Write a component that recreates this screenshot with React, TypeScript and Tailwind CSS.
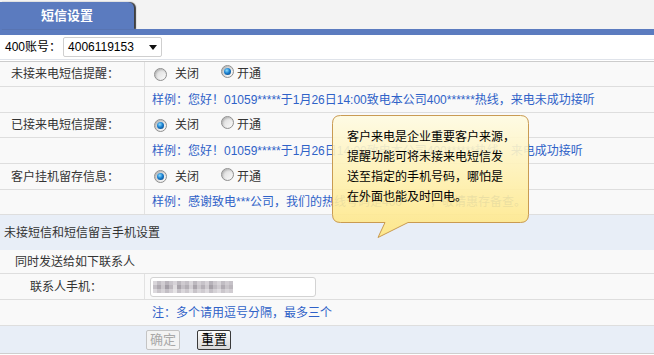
import React from "react";

const MOSAIC = [
  ["#d9d6da", "#c2bec4", "#d1cdd2", "#b9b4bb", "#c9c5cb", "#d7d3d8", "#bcb8be", "#cfcbd0", "#c4c0c6", "#dad7db", "#bdb9bf", "#d3cfd4", "#c7c3c9", "#d6d2d7", "#b7b3ba", "#ccc8cd", "#d8d5d9", "#c1bdc3", "#d0ccd1", "#c6c2c8"],
  ["#c4c0c6", "#afaab1", "#cbc7cc", "#a39ea6", "#bdb8be", "#e0dde0", "#a8a3aa", "#c3bfc5", "#b3afb5", "#d2ced3", "#aaa5ac", "#cac6cb", "#b6b1b8", "#cfcbd0", "#a6a1a8", "#c0bcc2", "#d0ccd1", "#b1acb3", "#c8c4c9", "#bcb7bd"],
  ["#dcd9dd", "#c9c5ca", "#d7d4d8", "#c3bfc5", "#d4d0d5", "#e6e4e6", "#c6c2c8", "#dad7db", "#cdc9ce", "#e1dfe2", "#c8c4c9", "#d9d6da", "#cfcbd0", "#dedbdf", "#c5c1c7", "#d5d2d6", "#e0dde1", "#cbc7cc", "#d8d5d9", "#d0ccd1"],
];

function Radio({ checked }: { checked?: boolean }) {
  return (
    <span className="relative inline-block h-[13px] w-[13px] shrink-0 rounded-full border border-[#8f8f8f] bg-gradient-to-br from-[#d8d8d8] to-[#fbfbfb] shadow-[inset_1px_1px_2px_rgba(0,0,0,0.2)]">
      {checked && (
        <span className="absolute left-[2px] top-[2px] h-[7px] w-[7px] rounded-full bg-[radial-gradient(circle_at_40%_35%,#8fe0ff_0%,#1a7fd0_45%,#063a6e_100%)]" />
      )}
    </span>
  );
}

function Switch({ on }: { on: boolean }) {
  return (
    <div className="flex items-center pl-[9px]">
      <Radio checked={!on} />
      <span className="ml-[8px]">关闭</span>
      <span className="ml-[22px]"><Radio checked={on} /></span>
      <span className="ml-[3px]">开通</span>
    </div>
  );
}

function Row({ label, h, children }: { label?: string; h: string; children?: React.ReactNode }) {
  return (
    <div className={`flex border-b border-[#dedede] bg-[#f9f9f9] ${h}`}>
      <div className="flex w-[145px] shrink-0 items-center border-r border-[#e2e2e2] pl-[11px] text-[#333]">{label}</div>
      <div className="flex flex-1 items-center">{children}</div>
    </div>
  );
}

function Sample({ text }: { text: string }) {
  return <span className="whitespace-nowrap pl-[7px] text-[#2f62c8]">{text}</span>;
}

function Tip() {
  return (
    <div className="absolute left-[332px] top-[115px] h-[124px] w-[198px]">
      <svg width="198" height="124" className="absolute left-0 top-0">
        <defs>
          <linearGradient id="tipbg" x1="0" y1="0" x2="0" y2="1">
            <stop offset="0" stopColor="#fffbe2" />
            <stop offset="1" stopColor="#ffe680" />
          </linearGradient>
        </defs>
        <path
          d="M8.5 0.5 H188.5 Q196.5 0.5 196.5 8.5 V99.5 Q196.5 107.5 188.5 107.5 H76 L46 122.5 L53 107.5 H8.5 Q0.5 107.5 0.5 99.5 V8.5 Q0.5 0.5 8.5 0.5 Z"
          fill="url(#tipbg)"
          fillOpacity="0.9"
          stroke="#c99b52"
          strokeWidth="1"
        />
      </svg>
      <div className="relative whitespace-nowrap pl-[15px] pt-[12px] leading-[20px] text-black">
        客户来电是企业重要客户来源，<br />
        提醒功能可将未接来电短信发<br />
        送至指定的手机号码，哪怕是<br />
        在外面也能及时回电。
      </div>
    </div>
  );
}

export default function App() {
  return (
    <div className="relative w-[654px] bg-white font-['Liberation_Sans','Noto_Sans_CJK_SC',sans-serif] text-[12px] text-[#333]">
      <div className="flex h-[29px] items-end bg-[#f3f3f3]">
        <div className="flex h-[27px] w-[134px] items-center justify-center rounded-tr-[6px] bg-[#5b7bbf] text-[13px] font-bold text-white shadow-[2px_0_1px_#3f3f3f]">
          短信设置
        </div>
      </div>
      <div className="h-[6px] bg-[#5b7bbf]" />

      <div className="flex h-[24px] items-center bg-white pl-[5px] text-black">
        <span>400账号：</span>
        <div className="ml-[2px] flex h-[20px] w-[99px] items-center justify-between rounded-[2px] border border-[#cfcfcf] bg-white pl-[4px] pr-[4px]">
          <span>4006119153</span>
          <svg width="8" height="5" viewBox="0 0 8 5"><path d="M0 0H8L4 5Z" fill="#111" /></svg>
        </div>
      </div>
      <div className="h-px bg-[#dfe3ea]" />
      <div className="h-px bg-white" />
      <div className="h-px bg-[#cccccc]" />

      <Row label="未接来电短信提醒：" h="h-[25px]"><Switch on /></Row>
      <Row h="h-[26px]"><Sample text="样例：您好！01059*****于1月26日14:00致电本公司400******热线，来电未成功接听" /></Row>
      <Row label="已接来电短信提醒：" h="h-[25px]"><Switch on={false} /></Row>
      <Row h="h-[26px]"><Sample text="样例：您好！01059*****于1月26日14:00致电本公司400******热线，来电成功接听" /></Row>
      <Row label="客户挂机留存信息：" h="h-[26px]"><Switch on={false} /></Row>
      <Row h="h-[25px]"><Sample text="样例：感谢致电***公司，我们的热线号码是400******，敬请惠存备查。" /></Row>

      <div className="flex h-[35px] items-center bg-[#e8eef7] pl-[4px] text-[#333]">未接短信和短信留言手机设置</div>

      <div className="flex h-[24px] items-center border-b border-[#dedede] bg-[#f9f9f9] pl-[15px]">同时发送给如下联系人</div>
      <div className="flex h-[26px] border-b border-[#dedede] bg-[#f9f9f9]">
        <div className="flex w-[145px] shrink-0 items-center border-r border-[#e2e2e2] pl-[30px]">联系人手机：</div>
        <div className="flex flex-1 items-center">
          <div className="ml-[5px] flex h-[20px] w-[166px] items-center rounded-[3px] border border-[#d3d3d3] bg-white pl-[2px]">
            <div className="flex flex-col">
              {MOSAIC.map((row, i) => (
                <div key={i} className="flex">
                  {row.map((c, j) => (
                    <span key={j} className="h-[4px] w-[4px]" style={{ background: c }} />
                  ))}
                </div>
              ))}
            </div>
          </div>
        </div>
      </div>
      <div className="flex h-[26px] items-center border-b border-[#dedede] bg-[#f9f9f9] pl-[152px] text-[#2f62c8]">
        注：多个请用逗号分隔，最多三个
      </div>
      <div className="flex h-[28px] items-center border-b border-[#cfcfcf] bg-[#e8eef7] pl-[146px]">
        <button disabled className="flex h-[20px] w-[34px] items-center justify-center rounded-[2px] border border-[#c4c4c4] bg-[#f3f3f3] text-[13px] text-[#a8a8a8]">
          确定
        </button>
        <button className="ml-[17px] flex h-[20px] w-[34px] items-center justify-center rounded-[2px] border border-[#3a3a3a] bg-gradient-to-b from-[#fdfdfd] to-[#d9d9d9] text-[13px] text-black">
          重置
        </button>
      </div>
      <div className="h-[2px] bg-white" />

      <Tip />
    </div>
  );
}
